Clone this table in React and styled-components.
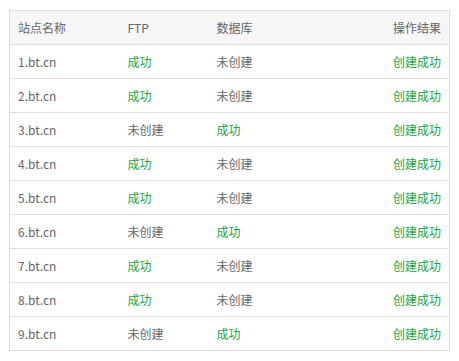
import React from "react";
import styled, { createGlobalStyle } from "styled-components";

const GlobalStyle = createGlobalStyle`
  body {
    margin: 0;
    background: #fff;
    font-family: "Microsoft YaHei", "Noto Sans CJK SC", "Liberation Sans", sans-serif;
  }
`;

const Wrapper = styled.div`
  padding: 10px 10px 0 9px;
`;

const Table = styled.table`
  width: 440px;
  table-layout: fixed;
  border-collapse: collapse;
  border: 1px solid #ddd;
  font-size: 12px;
  color: #666;
`;

const Col = styled.col`
  width: ${(props) => props.$w};
`;

const HeadCell = styled.th`
  height: 33px;
  padding: 0 8px 0 8px;
  background: #f6f6f6;
  font-weight: normal;
  text-align: ${(props) => (props.$right ? "right" : "left")};
  border-bottom: 1px solid #ddd;
`;

const Cell = styled.td`
  height: 33px;
  padding: 0 8px 0 8px;
  text-align: ${(props) => (props.$right ? "right" : "left")};
  color: ${(props) => (props.$ok ? "#20a53a" : "#666")};
  border-top: 1px solid #ddd;
`;

const rows = [
  { ftp: true, db: false },
  { ftp: true, db: false },
  { ftp: false, db: true },
  { ftp: true, db: false },
  { ftp: true, db: false },
  { ftp: false, db: true },
  { ftp: true, db: false },
  { ftp: true, db: false },
  { ftp: false, db: true },
];

const status = (ok) => (ok ? "成功" : "未创建");

export default function App() {
  return (
    <>
      <GlobalStyle />
      <Wrapper>
        <Table>
          <colgroup>
            <Col $w="110px" />
            <Col $w="89px" />
            <Col $w="120px" />
            <Col $w="121px" />
          </colgroup>
          <thead>
            <tr>
              <HeadCell>站点名称</HeadCell>
              <HeadCell>FTP</HeadCell>
              <HeadCell>数据库</HeadCell>
              <HeadCell $right>操作结果</HeadCell>
            </tr>
          </thead>
          <tbody>
            {rows.map((r, i) => (
              <tr key={i}>
                <Cell>{i + 1}.bt.cn</Cell>
                <Cell $ok={r.ftp}>{status(r.ftp)}</Cell>
                <Cell $ok={r.db}>{status(r.db)}</Cell>
                <Cell $right $ok>
                  创建成功
                </Cell>
              </tr>
            ))}
          </tbody>
        </Table>
      </Wrapper>
    </>
  );
}
